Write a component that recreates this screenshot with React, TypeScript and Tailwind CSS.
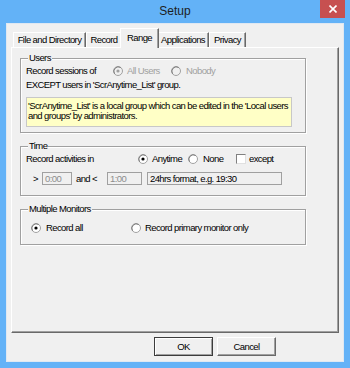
import React from 'react'

const ui = "font-['Liberation_Sans',sans-serif] text-[9.5px] tracking-[-0.6px] leading-none text-black"

function Radio({ checked = false, disabled = false }: { checked?: boolean; disabled?: boolean }) {
  return (
    <svg width="10" height="10" viewBox="0 0 10 10" className="shrink-0">
      <circle cx="5" cy="5" r="4.5" fill={disabled ? '#f0f0f0' : '#ffffff'} stroke="#a0a0a0" strokeWidth="1" />
      <path d="M1.6 7.8 A4.5 4.5 0 0 1 7.8 1.6" fill="none" stroke="#808080" strokeWidth="1" />
      {checked && <circle cx="5" cy="5" r="1.6" fill={disabled ? '#a0a0a0' : '#000000'} />}
    </svg>
  )
}

function Tab({ label, w, active = false }: { label: string; w: string; active?: boolean }) {
  if (active) {
    return (
      <div
        className={`${w} h-[20px] -mb-px -mx-[2px] relative z-10 flex items-start justify-center pt-[4px] bg-[#f0f0f0] border-t border-l border-white border-r border-r-[#696969] shadow-[inset_-1px_0_0_#a0a0a0]`}
      >
        {label}
      </div>
    )
  }
  return (
    <div
      className={`${w} h-[15px] flex items-center justify-center bg-[#f0f0f0] border-t border-l border-white border-r border-r-[#696969] shadow-[inset_-1px_0_0_#a0a0a0]`}
    >
      {label}
    </div>
  )
}

function Group({ title, className, children }: { title: string; className?: string; children: React.ReactNode }) {
  return (
    <fieldset
      className={`w-[286px] border border-[#a0a0a0] shadow-[1px_1px_0_#ffffff,inset_1px_1px_0_#ffffff] px-[5px] ${className ?? ''}`}
    >
      <legend className="ml-[2px] px-[1px] h-[12px] leading-[12px] bg-[#f0f0f0]">{title}</legend>
      {children}
    </fieldset>
  )
}

function Box({ w, text, gray = false }: { w: string; text: string; gray?: boolean }) {
  return (
    <div
      className={`${w} h-[13px] flex items-center pl-[2px] border border-[#a0a0a0] bg-[#f0f0f0] ${gray ? 'text-[#8d8d8d]' : 'text-black'}`}
    >
      {text}
    </div>
  )
}

export default function App() {
  return (
    <div className={`w-[350px] h-[368px] bg-[#63b2f7] flex flex-col ${ui}`}>
      {/* Title bar */}
      <div className="h-[23px] grid grid-cols-[1fr_auto_1fr] items-start">
        <div />
        <div className="pt-[4px] text-[12px] tracking-normal leading-[14px] text-[#1e1e1e]">Setup</div>
        <div className="flex justify-end pr-[5px]">
          <div className="w-[25px] h-[18px] bg-[#c75050] flex items-center justify-center">
            <svg width="8" height="8" viewBox="0 0 8 8">
              <path d="M0.5 0.5 L7.5 7.5 M7.5 0.5 L0.5 7.5" stroke="#ffffff" strokeWidth="1.6" />
            </svg>
          </div>
        </div>
      </div>

      {/* Client area */}
      <div className="mx-[6px] h-[339px] bg-[#f0f0f0] border border-[#dfe8f2] flex flex-col px-[4px]">
        {/* Tabs */}
        <div className="flex items-end h-[23px] pt-[4px] pl-[2px]">
          <Tab label="File and Directory" w="w-[73px]" />
          <Tab label="Record" w="w-[36px]" />
          <Tab label="Range" w="w-[39px]" active />
          <Tab label="Applications" w="w-[52px]" />
          <Tab label="Privacy" w="w-[37px]" />
        </div>

        {/* Panel */}
        <div className="w-[328px] h-[286px] border-t border-l border-white border-r border-b border-r-[#696969] border-b-[#696969] shadow-[inset_-1px_-1px_0_#a0a0a0] flex flex-col pl-[8px] pt-[4px]">
          <Group title="Users">
            <div className="h-[14px] flex items-center">
              <span className="w-[87px]">Record sessions of</span>
              <Radio checked disabled />
              <span className="ml-[4px] w-[33px] text-[#a0a0a0]">All Users</span>
              <span className="ml-[11px] flex items-center">
                <Radio disabled />
                <span className="ml-[5px] text-[#a0a0a0]">Nobody</span>
              </span>
            </div>
            <div className="h-[14px] flex items-center">EXCEPT users in 'ScrAnytime_List' group.</div>
            <div className="mt-[5px] mb-[5px] w-[266px] h-[30px] bg-[#ffffc6] border border-[#c8c8c8] px-[1px] pt-[3px] leading-[10px]">
              'ScrAnytime_List' is a local group which can be edited in the 'Local users and groups' by administrators.
            </div>
          </Group>

          <Group title="Time" className="mt-[7px] pb-[9px]">
            <div className="h-[14px] flex items-center">
              <span className="w-[112px]">Record activities in</span>
              <Radio checked />
              <span className="ml-[4px] w-[36px]">Anytime</span>
              <Radio />
              <span className="ml-[5px] w-[33px]">None</span>
              <span className="w-[10px] h-[10px] bg-white border-t border-l border-[#808080] border-r border-b border-r-[#e0e0e0] border-b-[#e0e0e0] shrink-0" />
              <span className="ml-[3px]">except</span>
            </div>
            <div className="mt-[5px] h-[15px] flex items-center">
              <span className="ml-[7px] w-[9px]">&gt;</span>
              <Box w="w-[30px]" text="0:00" gray />
              <span className="ml-[4px] w-[31px]">and &lt;</span>
              <Box w="w-[35px]" text="1:00" gray />
              <span className="w-[5px]" />
              <Box w="w-[135px]" text="24hrs format, e.g. 19:30" />
            </div>
          </Group>

          <Group title="Multiple Monitors" className="mt-[7px] pb-[9px]">
            <div className="mt-[6px] h-[14px] flex items-center">
              <span className="ml-[5px]" />
              <Radio checked />
              <span className="ml-[5px] w-[85px]">Record all</span>
              <Radio />
              <span className="ml-[4px]">Record primary monitor only</span>
            </div>
          </Group>
        </div>

        {/* Buttons */}
        <div className="mt-[4px] flex gap-[4px] pl-[143px]">
          <button className="w-[59px] h-[19px] bg-[#f0f0f0] border border-[#3c3c3c] shadow-[inset_1px_1px_0_#ffffff,inset_-1px_-1px_0_#a0a0a0] flex items-center justify-center">
            OK
          </button>
          <button className="w-[59px] h-[19px] bg-[#f0f0f0] border-t border-l border-white border-r border-b border-r-[#696969] border-b-[#696969] shadow-[inset_-1px_-1px_0_#a0a0a0] flex items-center justify-center">
            Cancel
          </button>
        </div>
      </div>
    </div>
  )
}
